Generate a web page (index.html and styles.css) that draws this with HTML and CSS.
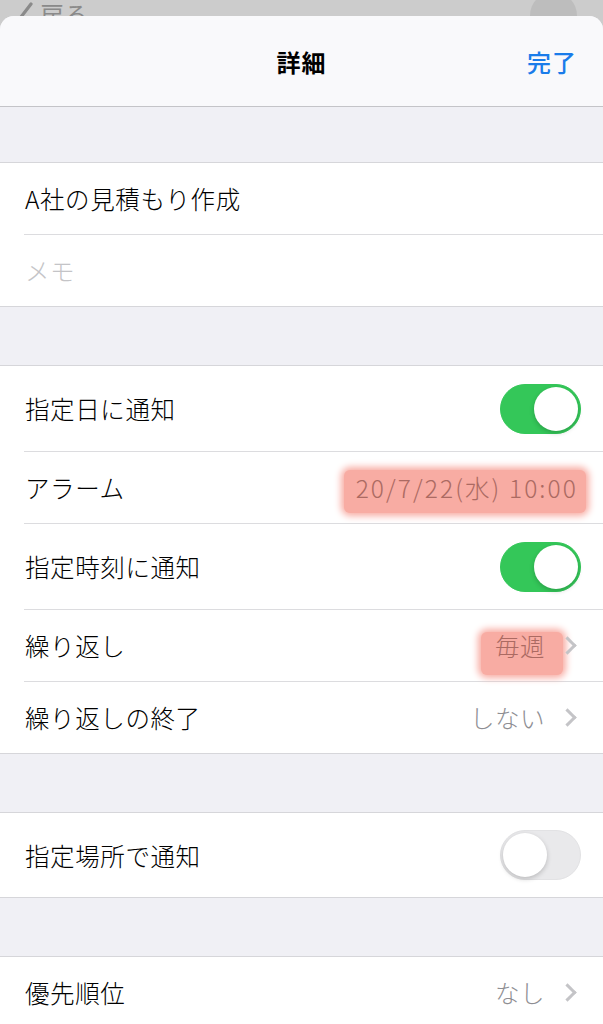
FILE: index.html
```html
<!DOCTYPE html>
<html lang="ja">
  <head>
    <meta charset="UTF-8" />
    <meta name="viewport" content="width=device-width, initial-scale=1.0" />
    <title>詳細</title>
    <link rel="stylesheet" href="styles.css">
  </head>
  <body>
    <div class="backdrop">
      <div class="back">
        <svg class="back-chevron" width="16" height="30" viewBox="0 0 16 30">
          <path d="M13 2 L3 15 L13 28" fill="none" stroke="#8a8a8a" stroke-width="3.2" stroke-linecap="round" stroke-linejoin="round" />
        </svg>
        <span>戻る</span>
      </div>
      <div class="avatar"></div>
    </div>

    <div class="sheet">
      <div class="header">
        <span class="header-spacer"></span>
        <h1 class="title">詳細</h1>
        <span class="done">完了</span>
      </div>

      <div class="gap gap-first"></div>

      <div class="group">
        <div class="row">
          <span class="label">A社の見積もり作成</span>
        </div>
        <div class="row">
          <span class="label placeholder">メモ</span>
        </div>
      </div>

      <div class="gap"></div>

      <div class="group">
        <div class="row row-tall">
          <span class="label">指定日に通知</span>
          <span class="toggle on"><span class="knob"></span></span>
        </div>
        <div class="row">
          <span class="label">アラーム</span>
          <span class="value value-date"><span class="marker marker-date">20/7/22(水) 10:00</span></span>
        </div>
        <div class="row row-tall">
          <span class="label">指定時刻に通知</span>
          <span class="toggle on"><span class="knob"></span></span>
        </div>
        <div class="row">
          <span class="label">繰り返し</span>
          <span class="value"><span class="marker marker-week">毎週</span><span class="chevron"></span></span>
        </div>
        <div class="row">
          <span class="label">繰り返しの終了</span>
          <span class="value">しない<span class="chevron"></span></span>
        </div>
      </div>

      <div class="gap"></div>

      <div class="group">
        <div class="row row-tall">
          <span class="label">指定場所で通知</span>
          <span class="toggle"><span class="knob"></span></span>
        </div>
      </div>

      <div class="gap"></div>

      <div class="group">
        <div class="row">
          <span class="label">優先順位</span>
          <span class="value">なし<span class="chevron"></span></span>
        </div>
      </div>
    </div>
  </body>
</html>
```

FILE: styles.css
```css
body {
  margin: 0;
  background-color: #cccccc;
  font-family: "Noto Sans CJK JP", "Noto Sans", sans-serif;
  color: #000;
}
.backdrop {
  height: 16px;
  overflow: hidden;
  display: flex;
  justify-content: space-between;
  align-items: flex-start;
  padding: 0 26px 0 18px;
}
.back {
  display: flex;
  align-items: flex-start;
  gap: 6px;
  color: #8a8a8a;
  font-size: 24px;
  line-height: 1;
  margin-top: 2px;
}
.back-chevron {
  display: block;
}
.avatar {
  width: 47px;
  height: 47px;
  border-radius: 50%;
  background-color: #bdbdbd;
  margin-top: -8px;
}
.sheet {
  background-color: #f0f0f5;
  border-radius: 14px 14px 0 0;
  overflow: hidden;
}
.header {
  height: 90px;
  background-color: #f9f9fb;
  border-bottom: 1px solid #c4c4c8;
  display: flex;
  align-items: center;
  justify-content: space-between;
  padding: 0 26px;
}
.header-spacer {
  width: 50px;
}
.title {
  margin: 0;
  font-size: 24px;
  font-weight: 700;
  letter-spacing: 1px;
}
.done {
  width: 50px;
  color: #1a7cea;
  font-size: 24px;
  font-weight: 500;
  letter-spacing: 1px;
}
.gap {
  height: 58px;
}
.gap-first {
  height: 55px;
}
.group {
  background-color: #fff;
  border-top: 1px solid #d6d6da;
  border-bottom: 1px solid #d6d6da;
}
.row {
  height: 71px;
  margin-left: 24px;
  padding-left: 1px;
  padding-right: 22px;
  display: flex;
  align-items: center;
  justify-content: space-between;
  border-bottom: 1px solid #dcdcdf;
}
.row:last-child {
  border-bottom: none;
}
.row-tall {
  height: 85px;
}
.row-tall:last-child {
  height: 84px;
}
.label {
  font-size: 24.5px;
  font-weight: 300;
  letter-spacing: 0.6px;
}
.placeholder {
  color: #c4c4c7;
}
.value {
  display: flex;
  align-items: center;
  font-size: 24.5px;
  font-weight: 300;
  color: #8e8e93;
  letter-spacing: 0.5px;
  margin-right: 5px;
}
.value-date {
  margin-right: 3px;
  letter-spacing: 2.1px;
}
.marker {
  position: relative;
  z-index: 0;
  color: #ab6a62;
}
.marker::before {
  content: "";
  position: absolute;
  z-index: -1;
  border-radius: 6px;
  background-color: #f8aca3;
  box-shadow: 0 0 7px 3px #f8aca3;
}
.marker-date::before {
  left: -12px;
  right: -8px;
  top: 0;
  bottom: -8px;
}
.marker-week::before {
  left: -14px;
  right: -18px;
  top: 4px;
  bottom: -12px;
}
.chevron {
  width: 10px;
  height: 10px;
  border-top: 3px solid #c4c4c7;
  border-right: 3px solid #c4c4c7;
  transform: rotate(45deg);
  margin-left: 16px;
  margin-right: 2px;
}
.toggle {
  width: 81px;
  height: 50px;
  border-radius: 25px;
  background-color: #e9e9eb;
  box-sizing: border-box;
  border: 1px solid #e2e2e4;
  display: flex;
  align-items: center;
  padding: 2px;
}
.toggle.on {
  background-color: #34c759;
  border-color: #34c759;
  justify-content: flex-end;
}
.knob {
  width: 44px;
  height: 44px;
  border-radius: 50%;
  background-color: #fff;
  box-shadow: 0 2px 5px rgba(0, 0, 0, 0.2);
}
```
